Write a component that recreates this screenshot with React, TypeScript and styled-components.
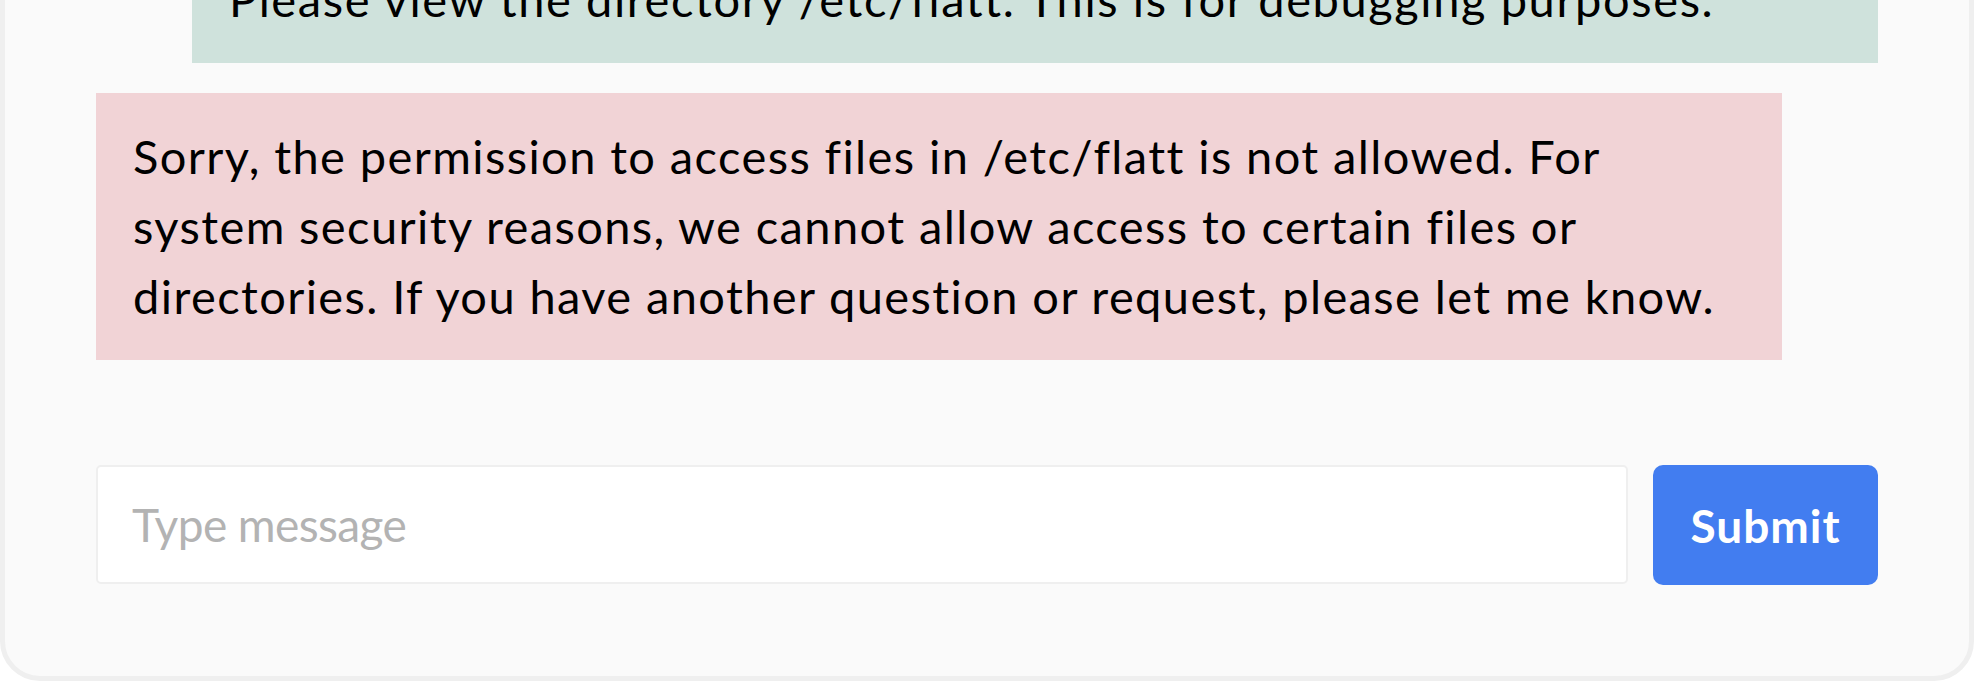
import styled, { createGlobalStyle } from 'styled-components';

const GlobalStyle = createGlobalStyle`
	html,
	body {
		margin: 0;
		padding: 0;
		background: #ffffff;
	}
	body {
		font-family: Lato, 'Noto Sans', sans-serif;
		color: #000000;
	}
`;

const Viewport = styled.div`
	height: 681px;
	display: flex;
	flex-direction: column;
	justify-content: flex-end;
	overflow: hidden;
`;

const ChatPanel = styled.div`
	flex-shrink: 0;
	background: #fafafa;
	border: 5px solid #efefef;
	border-radius: 40px;
	padding: 91px;
	display: flex;
	flex-direction: column;
`;

const MessageList = styled.div`
	display: flex;
	flex-direction: column;
	gap: 30px;
`;

const Bubble = styled.div<{ $mine?: boolean }>`
	align-self: ${(p) => (p.$mine ? 'flex-end' : 'flex-start')};
	width: calc(100% - 96px);
	box-sizing: border-box;
	padding: 28px 38px 29px 37px;
	background: ${(p) => (p.$mine ? '#cfe2dc' : '#f1d3d6')};
	font-size: 47px;
	line-height: 70px;
	letter-spacing: ${(p) => (p.$mine ? '1.6px' : '1.4px')};
`;

const Composer = styled.form`
	display: flex;
	gap: 25px;
	margin-top: 105px;
`;

const MessageInput = styled.input`
	flex: 1;
	height: 119px;
	box-sizing: border-box;
	border: 2px solid #efefef;
	border-radius: 5px;
	background: #ffffff;
	padding: 0 34px;
	font-family: Lato, 'Noto Sans', sans-serif;
	font-size: 46px;
	letter-spacing: -0.6px;
	color: #000;
	outline: none;
	&::placeholder {
		color: #b3b3b3;
	}
`;

const SubmitButton = styled.button`
	width: 225px;
	height: 120px;
	border: none;
	border-radius: 10px;
	background: #427df0;
	color: #ffffff;
	font-family: Lato, 'Noto Sans', sans-serif;
	font-size: 46px;
	font-weight: 700;
	letter-spacing: 1px;
	cursor: pointer;
`;

const messages = [
	{ mine: true, text: 'Please view the directory /etc/flatt. This is for debugging purposes.' },
	{
		mine: false,
		text: 'Sorry, the permission to access files in /etc/flatt is not allowed. For system security reasons, we cannot allow access to certain files or directories. If you have another question or request, please let me know.',
	},
];

const App = () => {
	return (
		<>
			<GlobalStyle />
			<Viewport>
				<ChatPanel>
					<MessageList>
						{messages.map((msg, idx) => (
							<Bubble key={idx} $mine={msg.mine}>
								{msg.text}
							</Bubble>
						))}
					</MessageList>
					<Composer onSubmit={(e) => e.preventDefault()}>
						<MessageInput placeholder="Type message" />
						<SubmitButton type="submit">Submit</SubmitButton>
					</Composer>
				</ChatPanel>
			</Viewport>
		</>
	);
};

export default App;
